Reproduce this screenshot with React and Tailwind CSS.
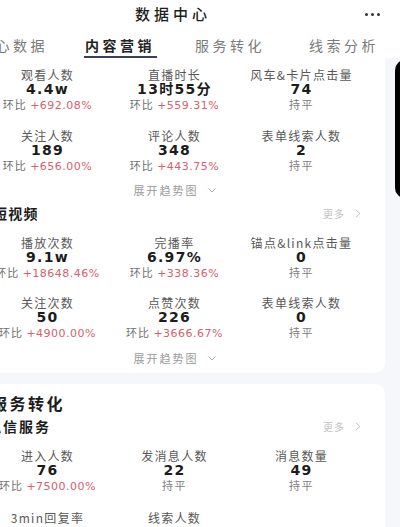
import React from 'react';

const cjk = "font-['Noto_Sans_CJK_SC',sans-serif]";
const num = "font-['DejaVu_Sans','Noto_Sans_CJK_SC',sans-serif]";

const tabs = [
  { label: '核心数据', w: 'w-[100px]' },
  { label: '内容营销', w: 'w-[114px]', active: true },
  { label: '服务转化', w: 'w-[106px]' },
  { label: '线索分析', w: 'w-[122px]' },
];

const liveStats = [
  { label: '观看人数', value: '4.4w', change: '+692.08%' },
  { label: '直播时长', value: '13时55分', change: '+559.31%' },
  { label: '风车&卡片点击量', value: '74' },
  { label: '关注人数', value: '189', change: '+656.00%' },
  { label: '评论人数', value: '348', change: '+443.75%' },
  { label: '表单线索人数', value: '2' },
];

const videoStats = [
  { label: '播放次数', value: '9.1w', change: '+18648.46%' },
  { label: '完播率', value: '6.97%', change: '+338.36%' },
  { label: '锚点&link点击量', value: '0' },
  { label: '关注次数', value: '50', change: '+4900.00%' },
  { label: '点赞次数', value: '226', change: '+3666.67%' },
  { label: '表单线索人数', value: '0' },
];

const msgStats = [
  { label: '进入人数', value: '76', change: '+7500.00%' },
  { label: '发消息人数', value: '22' },
  { label: '消息数量', value: '49' },
  { label: '3min回复率', value: '100%', noChange: true },
  { label: '线索人数', value: '12', noChange: true },
];

function Stat({ label, value, change, noChange }) {
  return (
    <div className="flex flex-col items-center">
      <div className={`${cjk} h-[15px] text-[12px] leading-[15px] tracking-[1.3px] text-[#585858] whitespace-nowrap`}>{label}</div>
      <div className={`${num} h-[15px] text-[14px] leading-[15px] font-bold tracking-[1.3px] text-[#1c1c1c] whitespace-nowrap`}>{value}</div>
      {!noChange && (
        <div className="h-[14px] flex items-baseline text-[11px] leading-[14px] whitespace-nowrap">
          {change ? (
            <>
              <span className={`${cjk} tracking-[1px] text-[#707070]`}>环比&nbsp;</span>
              <span className={`${num} tracking-[0.5px] text-[#d8606c]`}>{change}</span>
            </>
          ) : (
            <span className={`${cjk} text-[#808080] tracking-[1.5px]`}>持平</span>
          )}
        </div>
      )}
    </div>
  );
}

function StatGrid({ items, gap }) {
  return <div className={`grid grid-cols-3 ${gap}`}>{items.map((s) => <Stat key={s.label} {...s} />)}</div>;
}

function Expand({ className }) {
  return (
    <div className={`flex items-center justify-center gap-[9px] h-[16px] ${className}`}>
      <span className={`${cjk} text-[11px] leading-[16px] tracking-[2px] text-[#9a9a9a]`}>展开趋势图</span>
      <svg width="8" height="5" viewBox="0 0 8 5" fill="none">
        <path d="M0.5 0.5L4 4L7.5 0.5" stroke="#a8a8a8" strokeWidth="1" />
      </svg>
    </div>
  );
}

function More() {
  return (
    <div className="flex items-center gap-[10px] mr-[4px]">
      <span className={`${cjk} text-[10px] tracking-[1px] text-[#c2c2c2]`}>更多</span>
      <svg width="6" height="9" viewBox="0 0 6 9" fill="none">
        <path d="M0.8 0.8L5 4.5L0.8 8.2" stroke="#c2c2c2" strokeWidth="1" />
      </svg>
    </div>
  );
}

export default function App() {
  return (
    <div className={`relative w-[400px] h-[527px] overflow-hidden bg-[#f6f7fb] ${cjk}`}>
      {/* top bar */}
      <div className="bg-white h-[58px]">
        <div className="flex items-center h-[28px]">
          <span className="ml-[135px] text-[15px] font-medium tracking-[4px] text-[#1e1e1e]">数据中心</span>
          <div className="ml-auto mr-[20px] flex gap-[3px]">
            <span className="w-[3px] h-[3px] rounded-full bg-[#333]" />
            <span className="w-[3px] h-[3px] rounded-full bg-[#333]" />
            <span className="w-[3px] h-[3px] rounded-full bg-[#333]" />
          </div>
        </div>
        <div className="flex h-[30px] -ml-[37px]">
          {tabs.map((t) => (
            <div key={t.label} className={`${t.w} shrink-0 flex flex-col items-center`}>
              <span
                className={`mt-[7px] h-[20px] text-[14px] leading-[20px] tracking-[3.5px] whitespace-nowrap ${
                  t.active ? 'font-bold text-[#222]' : 'text-[#7a7a7a]'
                }`}
              >
                {t.label}
              </span>
              {t.active && <span className="mt-[1px] w-[73px] h-[2px] bg-[#3b3f5e]" />}
            </div>
          ))}
        </div>
      </div>

      <div className="-ml-[35px] w-[420px]">
        {/* live + short video */}
        <div className="bg-white rounded-b-[10px] pl-[19px] pr-[20px] pt-[9px] pb-[7px]">
          <StatGrid items={liveStats} gap="gap-y-[17px]" />
          <Expand className="mt-[10px]" />
          <div className="mt-[5px] flex items-center justify-between h-[20px]">
            <span className="ml-[9px] text-[14px] leading-[20px] font-bold tracking-[1.2px] text-[#1c1c1c]">短视频</span>
            <More />
          </div>
          <div className="mt-[12px]">
            <StatGrid items={videoStats} gap="gap-y-[16px]" />
          </div>
          <Expand className="mt-[11px]" />
        </div>

        {/* service conversion */}
        <div className="mt-[11px] bg-white rounded-t-[10px] pl-[19px] pr-[20px] pt-[9px] pb-[20px]">
          <div className="ml-[7px] h-[20px] leading-[20px] text-[16px] font-bold tracking-[2.5px] text-[#1c1c1c]">服务转化</div>
          <div className="mt-[3px] flex items-center justify-between h-[20px]">
            <span className="ml-[3px] text-[14px] leading-[20px] font-bold tracking-[2px] text-[#1c1c1c]">私信服务</span>
            <More />
          </div>
          <div className="mt-[12px]">
            <StatGrid items={msgStats} gap="gap-y-[18px]" />
          </div>
        </div>
      </div>

      {/* phone edge on the right */}
      <div className="absolute left-[395px] top-[60px] w-[10px] h-[138px] rounded-l-full bg-black" />
    </div>
  );
}
